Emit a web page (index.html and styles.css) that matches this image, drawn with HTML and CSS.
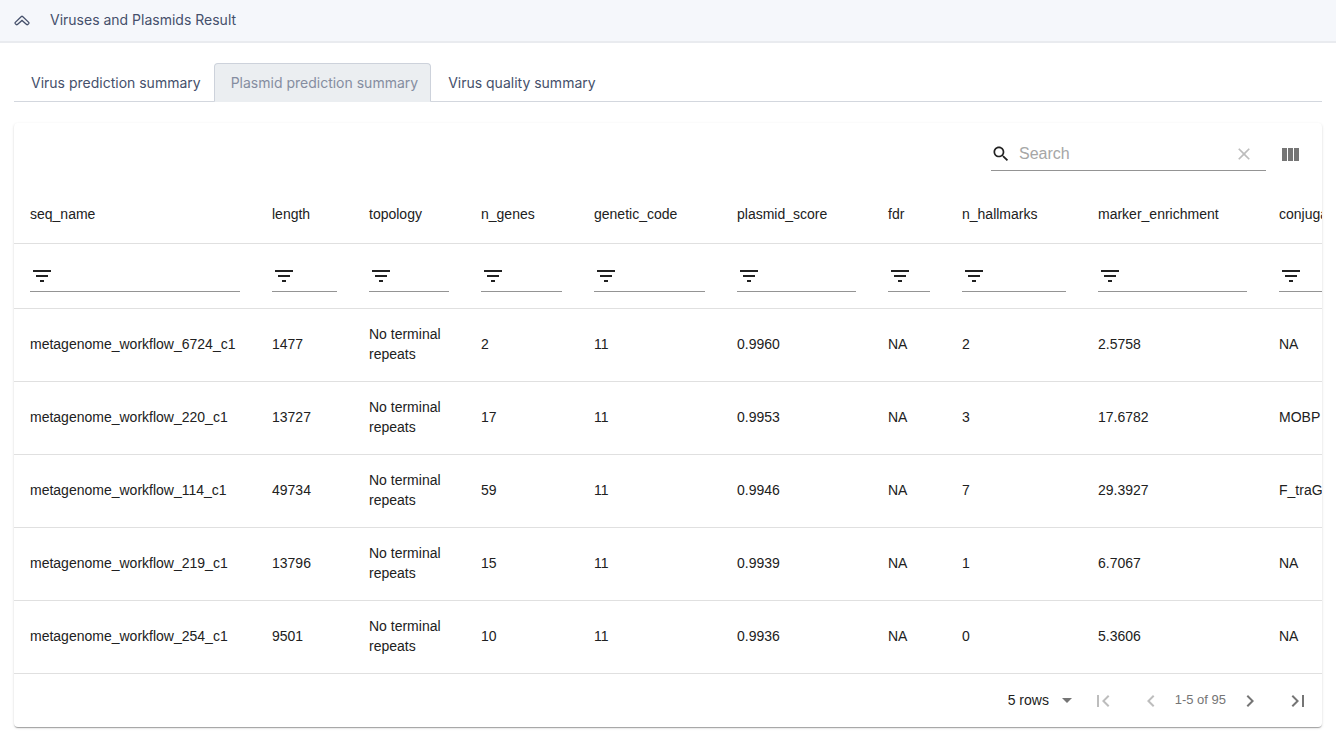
FILE: index.html
```
<!DOCTYPE html>
<html lang="en">
<head>
<meta charset="utf-8">
<meta name="viewport" content="width=device-width, initial-scale=1">
<title>Viruses and Plasmids Result</title>
<link rel="stylesheet" href="styles.css">
</head>
<body>
<svg class="sprite" aria-hidden="true">
  <symbol id="filter" viewBox="0 0 24 24"><path d="M10 18h4v-2h-4v2zM3 6v2h18V6H3zm3 7h12v-2H6v2z"/></symbol>
</svg>
<header class="section-head">
  <button class="collapse" type="button" aria-label="Collapse section">
    <svg width="16" height="12" viewBox="0 0 16 12"><path d="M7.400 1.500 1.300 7.400q-.5.600 0 1.200l.9.900q.6.500 1.200 0L8 5.400l4.600 4.100q.6.500 1.200 0l.9-.9q.5-.6 0-1.200L8.600 1.500q-.6-.5-1.200 0z"/></svg>
  </button>
  <h1 class="section-title">Viruses and Plasmids Result</h1>
</header>
<main class="content">
  <nav class="tabs" role="tablist">
    <button class="tab" type="button" role="tab">Virus prediction summary</button>
    <button class="tab tab-active" type="button" role="tab" aria-selected="true">Plasmid prediction summary</button>
    <button class="tab" type="button" role="tab">Virus quality summary</button>
  </nav>
  <section class="card">
    <div class="toolbar">
      <div class="search">
        <svg class="icon-small" viewBox="0 0 24 24"><path d="M15.500 14h-.79l-.28-.27C15.410 12.590 16 11.110 16 9.500 16 5.910 13.090 3 9.500 3S3 5.910 3 9.500 5.910 16 9.500 16c1.610 0 3.090-.59 4.230-1.570l.27.28v.79l5 4.990L20.490 19l-4.990-5zm-6 0C7.010 14 5 11.990 5 9.500S7.010 5 9.500 5 14 7.010 14 9.500 11.990 14 9.500 14z"/></svg>
        <input class="search-input" type="text" placeholder="Search" aria-label="Search">
        <button class="clear" type="button" aria-label="Clear search" disabled>
          <svg class="icon-small" viewBox="0 0 24 24"><path d="M19 6.410L17.590 5 12 10.590 6.410 5 5 6.410 10.590 12 5 17.590 6.410 19 12 13.410 17.590 19 19 17.590 13.410 12z"/></svg>
        </button>
      </div>
      <button class="icon-button" type="button" aria-label="Show columns">
        <svg class="icon" viewBox="0 0 24 24"><path d="M10 18h5V5h-5v13zm-6 0h5V5H4v13zM16 5v13h5V5h-5z"/></svg>
      </button>
    </div>
    <div class="table-scroll">
      <table class="table">
        <colgroup>
          <col class="col-name"><col class="col-length"><col class="col-topology"><col class="col-genes"><col class="col-code"><col class="col-score"><col class="col-fdr"><col class="col-hallmarks"><col class="col-marker"><col class="col-conj">
        </colgroup>
        <thead>
          <tr><th>seq_name</th><th>length</th><th>topology</th><th>n_genes</th><th>genetic_code</th><th>plasmid_score</th><th>fdr</th><th>n_hallmarks</th><th>marker_enrichment</th><th>conjugation_genes</th></tr>
        </thead>
        <tbody>
          <tr class="filter-row">
            <td><label class="filter"><svg class="icon"><use href="#filter"/></svg><input type="text" aria-label="Filter seq_name"></label></td>
            <td><label class="filter"><svg class="icon"><use href="#filter"/></svg><input type="text" aria-label="Filter length"></label></td>
            <td><label class="filter"><svg class="icon"><use href="#filter"/></svg><input type="text" aria-label="Filter topology"></label></td>
            <td><label class="filter"><svg class="icon"><use href="#filter"/></svg><input type="text" aria-label="Filter n_genes"></label></td>
            <td><label class="filter"><svg class="icon"><use href="#filter"/></svg><input type="text" aria-label="Filter genetic_code"></label></td>
            <td><label class="filter"><svg class="icon"><use href="#filter"/></svg><input type="text" aria-label="Filter plasmid_score"></label></td>
            <td><label class="filter"><svg class="icon"><use href="#filter"/></svg><input type="text" aria-label="Filter fdr"></label></td>
            <td><label class="filter"><svg class="icon"><use href="#filter"/></svg><input type="text" aria-label="Filter n_hallmarks"></label></td>
            <td><label class="filter"><svg class="icon"><use href="#filter"/></svg><input type="text" aria-label="Filter marker_enrichment"></label></td>
            <td><label class="filter"><svg class="icon"><use href="#filter"/></svg><input type="text" aria-label="Filter conjugation_genes"></label></td>
          </tr>
          <tr><td>metagenome_workflow_6724_c1</td><td>1477</td><td>No terminal repeats</td><td>2</td><td>11</td><td>0.9960</td><td>NA</td><td>2</td><td>2.5758</td><td>NA</td></tr>
          <tr><td>metagenome_workflow_220_c1</td><td>13727</td><td>No terminal repeats</td><td>17</td><td>11</td><td>0.9953</td><td>NA</td><td>3</td><td>17.6782</td><td>MOBP</td></tr>
          <tr><td>metagenome_workflow_114_c1</td><td>49734</td><td>No terminal repeats</td><td>59</td><td>11</td><td>0.9946</td><td>NA</td><td>7</td><td>29.3927</td><td>F_traG</td></tr>
          <tr><td>metagenome_workflow_219_c1</td><td>13796</td><td>No terminal repeats</td><td>15</td><td>11</td><td>0.9939</td><td>NA</td><td>1</td><td>6.7067</td><td>NA</td></tr>
          <tr><td>metagenome_workflow_254_c1</td><td>9501</td><td>No terminal repeats</td><td>10</td><td>11</td><td>0.9936</td><td>NA</td><td>0</td><td>5.3606</td><td>NA</td></tr>
        </tbody>
      </table>
    </div>
    <footer class="pager">
      <div class="rows">
        <select class="rows-select" aria-label="Rows per page"><option>5 rows</option><option>10 rows</option><option>20 rows</option></select>
        <svg class="icon caret" viewBox="0 0 24 24"><path d="M7 10l5 5 5-5z"/></svg>
      </div>
      <button class="page-button" type="button" aria-label="First page" disabled><svg class="icon" viewBox="0 0 24 24"><path d="M18.410 16.590L13.820 12l4.590-4.590L17 6l-6 6 6 6zM6 6h2v12H6z"/></svg></button>
      <button class="page-button" type="button" aria-label="Previous page" disabled><svg class="icon" viewBox="0 0 24 24"><path d="M15.410 7.410L14 6l-6 6 6 6 1.410-1.410L10.830 12z"/></svg></button>
      <span class="page-range">1-5 of 95</span>
      <button class="page-button" type="button" aria-label="Next page"><svg class="icon" viewBox="0 0 24 24"><path d="M10 6L8.590 7.410 13.170 12l-4.580 4.590L10 18l6-6z"/></svg></button>
      <button class="page-button" type="button" aria-label="Last page"><svg class="icon" viewBox="0 0 24 24"><path d="M5.590 7.410L10.180 12l-4.590 4.590L7 18l6-6-6-6zM16 6h2v12h-2z"/></svg></button>
    </footer>
  </section>
</main>
</body>
</html>
```
FILE: styles.css
```
* { box-sizing: border-box; }
body {
  margin: 0;
  background: #fff;
  color: #45506b;
  font-family: Inter, "Liberation Sans", sans-serif;
  font-size: 14px;
}
button, input, select {
  margin: 0;
  padding: 0;
  border: 0;
  outline: 0;
  background: none;
  color: inherit;
  font: inherit;
}
svg { display: block; flex: none; fill: currentColor; }
.sprite { position: absolute; width: 0; height: 0; }
.icon { width: 24px; height: 24px; }
.icon-small { width: 20px; height: 20px; }

.section-head {
  display: flex;
  align-items: center;
  gap: 20px;
  height: 43px;
  padding: 0 14px 2px;
  background: #f5f7fb;
  border-bottom: 2px solid #e9ebef;
}
.collapse { padding-top: 3px; }
.collapse svg { fill: none; stroke: currentColor; stroke-width: 1.3; }
.section-title { margin: 0; font-size: 14px; font-weight: 400; }

.content { padding: 20px 14px 14px; }
.tabs { display: flex; box-shadow: inset 0 -1px #d3d7de; }
.tab {
  height: 39px;
  padding: 0 12px 0 16px;
  border: 1px solid transparent;
  border-radius: 4px 4px 0 0;
}
.tab-active {
  background: #ebeef1;
  border-color: #cdd2db;
  border-bottom-color: #ebeef1;
  color: #858da0;
}

.card {
  margin-top: 21px;
  border-radius: 4px;
  background: #fff;
  color: #212121;
  font-family: "Liberation Sans", Arial, sans-serif;
  box-shadow: 0 2px 1px -1px rgba(0, 0, 0, .2), 0 1px 1px rgba(0, 0, 0, .14), 0 1px 3px rgba(0, 0, 0, .12);
}
.toolbar {
  display: flex;
  justify-content: flex-end;
  align-items: center;
  height: 64px;
  padding-right: 8px;
}
.search {
  display: flex;
  align-items: center;
  width: 275px;
  height: 32px;
  padding-bottom: 2px;
  border-bottom: 1px solid #949494;
}
.search-input { flex: 1; min-width: 0; padding-left: 8px; font-size: 16px; }
.search-input::placeholder { color: #a6a6a6; opacity: 1; }
.clear { padding-right: 12px; color: #bdbdbd; }
.icon-button { padding: 12px; color: #757575; }

.table-scroll { overflow-x: auto; scrollbar-width: none; }
.table { width: 1449px; min-width: 100%; table-layout: fixed; border-collapse: separate; border-spacing: 0; line-height: 20px; }
.col-name { width: 242px; }
.col-length { width: 97px; }
.col-topology { width: 112px; }
.col-genes { width: 113px; }
.col-code { width: 143px; }
.col-score { width: 151px; }
.col-fdr { width: 74px; }
.col-hallmarks { width: 136px; }
.col-marker { width: 181px; }
.col-conj { width: 200px; }
th, td {
  padding: 15px 16px 17px;
  border-bottom: 1px solid #e0e0e0;
  text-align: left;
  font-weight: 400;
}
th { line-height: 24px; }
.filter-row td { padding: 16px; }
.filter { display: flex; height: 32px; padding-top: 4px; border-bottom: 1px solid #949494; }
.filter input { flex: 1; width: 0; min-width: 0; }

.pager { display: flex; justify-content: flex-end; align-items: center; height: 53px; padding-bottom: 2px; }
.rows { display: flex; align-items: center; }
.rows-select { width: 47px; appearance: none; }
.caret { color: #757575; }
.page-button { padding: 13px 12px 11px; color: #757575; }
.page-button:disabled { color: #bdbdbd; }
.page-range { color: #757575; font-size: 13px; }
```
